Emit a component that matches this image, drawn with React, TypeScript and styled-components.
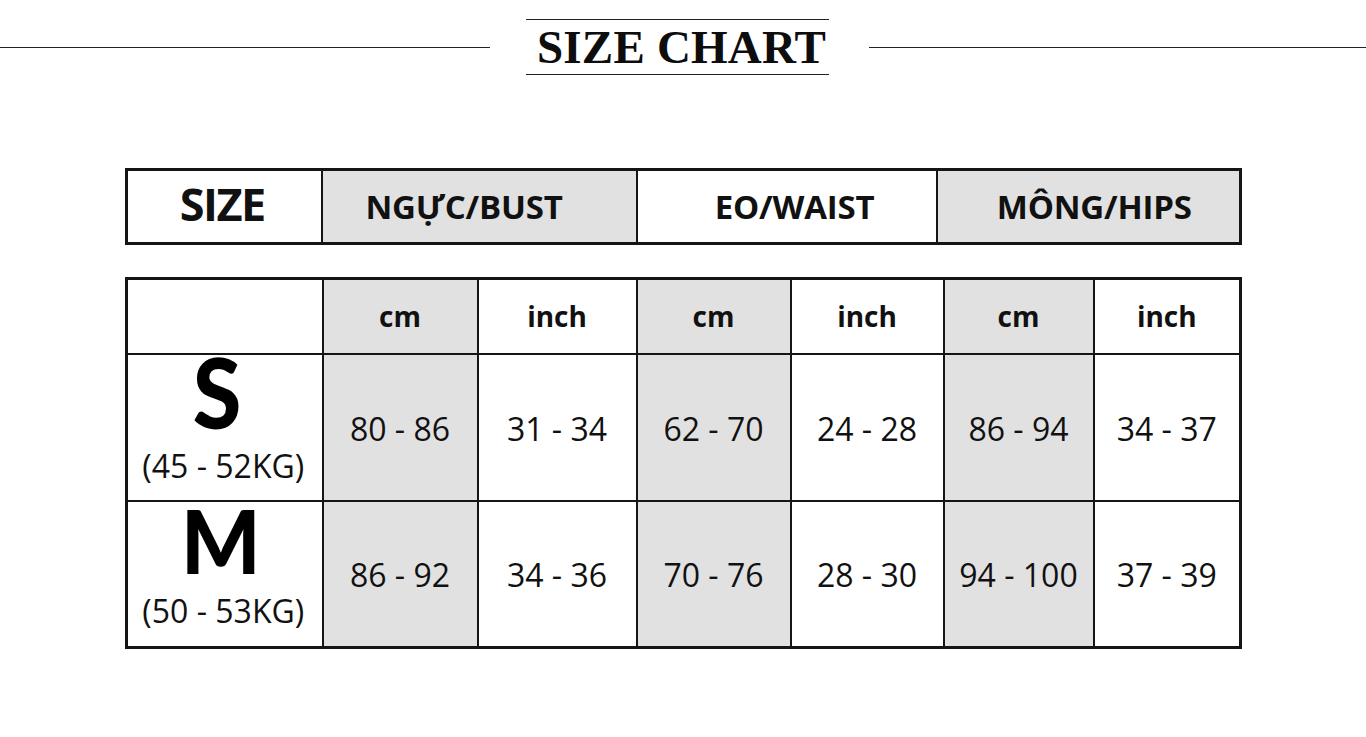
import { styled, createGlobalStyle } from 'styled-components'

const GlobalStyle = createGlobalStyle`
  html, body {
    margin: 0;
    padding: 0;
    background: #fff;
    color: #111;
    font-family: "Open Sans", "Liberation Sans", sans-serif;
  }
`

const GREY = '#e1e1e1'
const LINE = '#151515'

const headCols = [
  { label: 'SIZE', width: 195, grey: false, big: true, shift: -2 },
  { label: 'NGỰC/BUST', width: 315, grey: true, big: false, shift: -15 },
  { label: 'EO/WAIST', width: 300, grey: false, big: false, shift: 8 },
  { label: 'MÔNG/HIPS', width: 304, grey: true, big: false, shift: 6 },
]

const unitCols = [
  { width: 155, grey: true },
  { width: 159, grey: false },
  { width: 154, grey: true },
  { width: 153, grey: false },
  { width: 150, grey: true },
  { width: 147, grey: false },
]

const rows = [
  {
    size: 'S',
    kg: '(45 - 52KG)',
    values: ['80 - 86', '31 - 34', '62 - 70', '24 - 28', '86 - 94', '34 - 37'],
  },
  {
    size: 'M',
    kg: '(50 - 53KG)',
    values: ['86 - 92', '34 - 36', '70 - 76', '28 - 30', '94 - 100', '37 - 39'],
  },
]

export default function App() {
  return (
    <Page>
      <GlobalStyle />
      <TitleRow>
        <Rule />
        <Title>SIZE CHART</Title>
        <Rule />
      </TitleRow>

      <HeadTable>
        <colgroup>
          {headCols.map((c) => (
            <col key={c.label} style={{ width: c.width }} />
          ))}
        </colgroup>
        <tbody>
          <tr>
            {headCols.map((c) => (
              <HeadCell key={c.label} $grey={c.grey} $big={c.big} $shift={c.shift}>
                {c.label}
              </HeadCell>
            ))}
          </tr>
        </tbody>
      </HeadTable>

      <SizeTable>
        <colgroup>
          <col style={{ width: 196 }} />
          {unitCols.map((c, i) => (
            <col key={i} style={{ width: c.width }} />
          ))}
        </colgroup>
        <tbody>
          <UnitRow>
            <Cell />
            {unitCols.map((c, i) => (
              <UnitCell key={i} $grey={c.grey}>
                {i % 2 === 0 ? 'cm' : 'inch'}
              </UnitCell>
            ))}
          </UnitRow>
          {rows.map((r) => (
            <DataRow key={r.size}>
              <SizeCell>
                <SizeBox>
                  <SizeLetter $m={r.size === 'M'}>{r.size}</SizeLetter>
                  <Kg>{r.kg}</Kg>
                </SizeBox>
              </SizeCell>
              {r.values.map((v, i) => (
                <ValueCell key={i} $grey={unitCols[i].grey}>
                  {v}
                </ValueCell>
              ))}
            </DataRow>
          ))}
        </tbody>
      </SizeTable>
    </Page>
  )
}

const Page = styled.div`
  width: 1366px;
  height: 737px;
  padding-top: 19px;
  box-sizing: border-box;
`

const TitleRow = styled.div`
  display: grid;
  grid-template-columns: 490px 303px 1fr;
  align-items: center;
  column-gap: 36px;
  & > :last-child {
    margin-left: 4px;
  }
`

const Rule = styled.div`
  height: 1px;
  background: #222;
`

const Title = styled.h1`
  margin: 0;
  height: 56px;
  box-sizing: border-box;
  border-top: 1px solid #222;
  border-bottom: 1px solid #222;
  display: flex;
  align-items: center;
  justify-content: center;
  padding-left: 8px;
  font-family: "Liberation Serif", "DejaVu Serif", serif;
  font-weight: 700;
  font-size: 47px;
  letter-spacing: 0.2px;
  color: #0d0d0d;
`

const tableBase = `
  border-collapse: collapse;
  table-layout: fixed;
  margin-left: 125px;
  width: 1111px;
`

const HeadTable = styled.table`
  ${tableBase}
  margin-top: 93px;
  border: 3px solid ${LINE};
`

const HeadCell = styled.td<{ $grey: boolean; $big: boolean; $shift: number }>`
  height: ${(p) => (p.$big ? 65 : 71)}px;
  padding: 0 0 0 ${(p) => (p.$shift > 0 ? p.$shift * 2 : 0)}px;
  padding-right: ${(p) => (p.$shift < 0 ? -p.$shift * 2 : 0)}px;
  padding-bottom: ${(p) => (p.$big ? 6 : 0)}px;
  border: 2px solid ${LINE};
  background: ${(p) => (p.$grey ? GREY : '#fff')};
  text-align: center;
  font-weight: 700;
  font-size: ${(p) => (p.$big ? '45px' : '33px')};
  letter-spacing: ${(p) => (p.$big ? '-1.5px' : '-0.2px')};
  line-height: 1;
  vertical-align: middle;
`

const SizeTable = styled.table`
  ${tableBase}
  margin-top: 32px;
  border: 3px solid ${LINE};
`

const UnitRow = styled.tr`
  height: 75px;
`

const DataRow = styled.tr`
  height: 147px;
`

const Cell = styled.td`
  border: 2px solid ${LINE};
  padding: 0;
  text-align: center;
  vertical-align: middle;
`

const SizeCell = styled(Cell)`
  vertical-align: top;
`

const UnitCell = styled(Cell)<{ $grey: boolean }>`
  background: ${(p) => (p.$grey ? GREY : '#fff')};
  font-weight: 700;
  font-size: 28px;
`

const ValueCell = styled(Cell)<{ $grey: boolean }>`
  background: ${(p) => (p.$grey ? GREY : '#fff')};
  font-size: 32px;
  padding-top: 2px;
`

const SizeBox = styled.div`
  display: flex;
  flex-direction: column;
  align-items: center;
`

const SizeLetter = styled.span<{ $m: boolean }>`
  font-family: Lato, "Liberation Sans", sans-serif;
  font-weight: 900;
  font-size: ${(p) => (p.$m ? '88px' : '98px')};
  line-height: ${(p) => (p.$m ? '64px' : '70px')};
  margin: ${(p) => (p.$m ? '6px 7px 19px 0' : '1px 15px 20px 0')};
  transform: scaleX(${(p) => (p.$m ? 0.95 : 0.9)});
  color: #000;
`

const Kg = styled.span`
  font-size: 32px;
  line-height: 40px;
  margin-right: 3px;
`
